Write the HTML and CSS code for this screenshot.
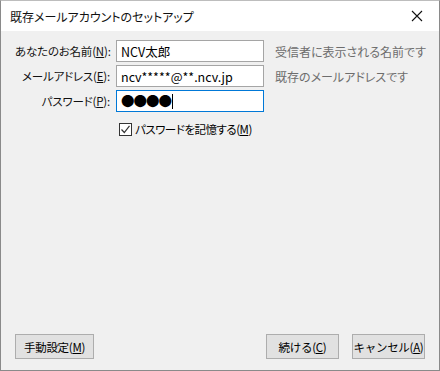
FILE: index.html
```html
<!DOCTYPE html>
<html lang="ja">
<head>
    <meta charset="UTF-8">
    <meta name="viewport" content="width=device-width, initial-scale=1.0">
    <title>既存メールアカウントのセットアップ</title>
    <link rel="stylesheet" href="styles.css">
</head>
<body>
    <div class="window">
        <div class="titlebar">
            <span class="title">既存メールアカウントのセットアップ</span>
            <span class="close">
                <svg width="12" height="12" viewBox="0 0 12 12">
                    <path d="M1 1 L11 11 M11 1 L1 11" stroke="#111" stroke-width="1.1" fill="none"/>
                </svg>
            </span>
        </div>
        <div class="content">
            <div class="form">
                <label class="label">あなたのお名前(<u>N</u>):</label>
                <div class="field">NCV太郎</div>
                <span class="hint">受信者に表示される名前です</span>

                <label class="label">メールアドレス(<u>E</u>):</label>
                <div class="field">ncv*****@**.ncv.jp</div>
                <span class="hint">既存のメールアドレスです</span>

                <label class="label">パスワード(<u>P</u>):</label>
                <div class="field focus"><span class="dots">●●●●</span><span class="caret"></span></div>
                <span class="hint"></span>

                <span></span>
                <div class="remember">
                    <span class="check">
                        <svg width="11" height="11" viewBox="0 0 11 11">
                            <path d="M1.5 5.5 L4.3 8.5 L9.5 1.8" stroke="#333" stroke-width="1.2" fill="none"/>
                        </svg>
                    </span>
                    <span class="remember-text">パスワードを記憶する(<u>M</u>)</span>
                </div>
            </div>
            <div class="footer">
                <button class="btn manual">手動設定(<u>M</u>)</button>
                <div class="right">
                    <button class="btn">続ける(<u>C</u>)</button>
                    <button class="btn">キャンセル(<u>A</u>)</button>
                </div>
            </div>
        </div>
    </div>
</body>
</html>
```

FILE: styles.css
```css
* {
    box-sizing: border-box;
}
body {
    margin: 0;
    font-family: "Noto Sans CJK JP", "Noto Sans", sans-serif;
    font-feature-settings: "palt";
    font-size: 12px;
    color: #000;
}
.window {
    width: 440px;
    height: 371px;
    display: flex;
    flex-direction: column;
    border: 1px solid #8a8a8a;
    border-top-color: #bdbdbd;
    background: #f0f0f0;
}
.titlebar {
    height: 30px;
    background: #fff;
    display: flex;
    align-items: center;
    justify-content: space-between;
    padding: 0 8px 0 9px;
}
.title {
    font-size: 12px;
    color: #111;
}
.close {
    width: 12px;
    height: 12px;
    margin-right: 8px;
    display: flex;
}
.content {
    flex: 1;
    display: flex;
    flex-direction: column;
    justify-content: space-between;
    padding: 9px 14px 11px 14px;
}
.form {
    display: grid;
    grid-template-columns: 101px 148px 1fr;
    row-gap: 3px;
    align-items: center;
}
.label {
    text-align: right;
    padding-right: 6px;
    white-space: nowrap;
    font-size: 11.5px;
    letter-spacing: -0.2px;
    color: #111;
}
.field {
    height: 22px;
    border: 1px solid #a5a5a5;
    background: #fff;
    padding: 0 4px;
    display: flex;
    align-items: center;
    font-size: 12.5px;
    white-space: nowrap;
    overflow: hidden;
}
.focus {
    border-color: #0078d7;
}
.dots {
    font-size: 13.5px;
    letter-spacing: -1px;
    line-height: 1;
}
.caret {
    width: 1px;
    height: 15px;
    background: #000;
    margin-left: 1px;
}
.hint {
    color: #6d6d6d;
    padding-left: 11px;
    white-space: nowrap;
}
.remember {
    grid-column: 2 / 4;
    display: flex;
    align-items: center;
    gap: 3px;
    margin-top: 6px;
    padding-left: 3px;
    white-space: nowrap;
}
.remember-text {
    font-size: 11.5px;
    letter-spacing: -0.5px;
}
.check {
    width: 13px;
    height: 13px;
    border: 1px solid #333;
    background: #fff;
    display: flex;
    align-items: center;
    justify-content: center;
}
.footer {
    display: flex;
    justify-content: space-between;
    align-items: flex-end;
}
.right {
    display: flex;
    gap: 13px;
}
.btn {
    height: 25px;
    width: 73px;
    padding: 0;
    background: #e1e1e1;
    border: 1px solid #adadad;
    font-family: inherit;
    font-size: 11.5px;
    letter-spacing: -0.3px;
    white-space: nowrap;
    color: #000;
}
.manual {
    width: 79px;
}
```
